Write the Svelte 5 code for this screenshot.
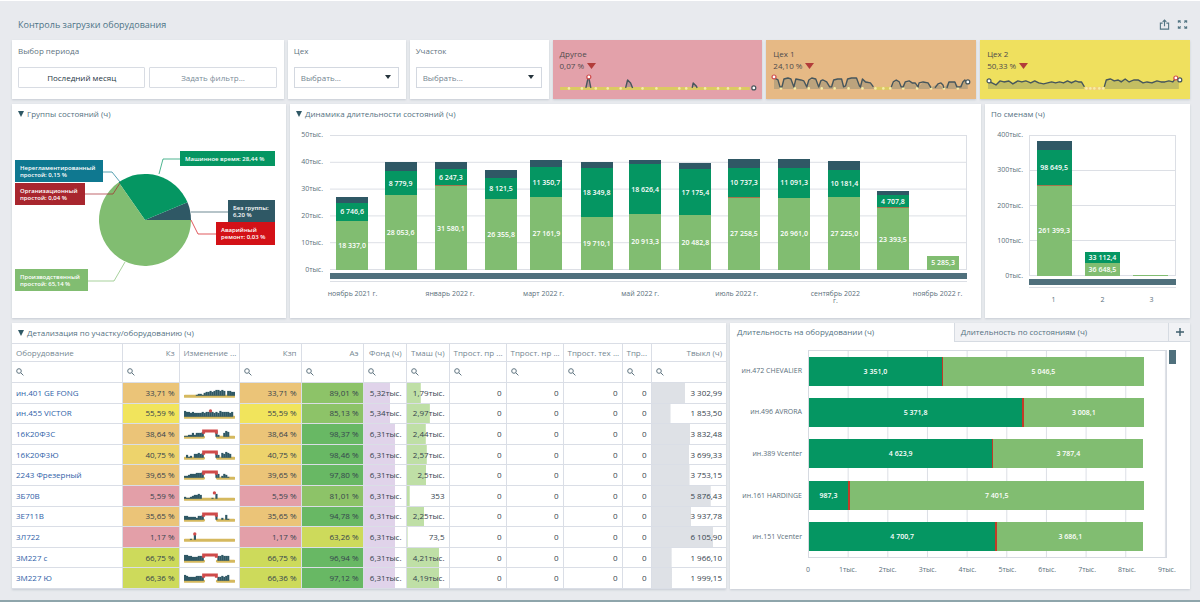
<script lang="ts">
  type Period = { days: number; label?: string; idle: number; work: number; none: number; fault?: boolean };
  type Shift = { label: string; idle: number; work: number; none: number; fault?: boolean };
  type Machine = { name: string; work: number; fault: number; idle: number };

  const MONTH_MAX = 50000;
  const SHIFT_MAX = 400000;
  const MACHINE_MAX = 9000;

  let activeTab = $state(0);
  let shop = $state('');
  let area = $state('');

  const kpis = [
    {
      name: 'Другое',
      value: '0,07 %',
      tone: 'pink',
      line: 'M26 15L28 6L29 5L31 15M66 15L68 7L71 10L73 15M133 15L134 10L137 13L138 15',
      fill: 'M26 15L28 6L29 5L31 15ZM66 15L68 7L71 10L73 15ZM133 15L134 10L137 13L138 15Z',
      base: [[0, 191]],
      dots: [9, 22, 36, 48, 61, 83, 97, 120, 127, 146, 159, 169, 181],
      max: [28, 4],
      last: [195, 15]
    },
    {
      name: 'Цех 1',
      value: '24,10 %',
      tone: 'orange',
      line: 'M1 5L5 7L7 14L9 14L11 6L15 5L18 6L21 14L23 6L28 7L31 8L34 14L36 7L39 5L43 6L46 14L48 8L50 7L54 9L57 14L59 14L61 7L65 6L69 6L71 14L73 13L75 6L79 5L84 5L87 13L88 14L90 6L93 9L98 10L101 14M119 14L121 9L124 7L127 9L129 14L131 14L133 9L137 8L140 10L143 10L146 14L147 10L151 9L156 10L159 15M163 15L166 11L169 10L171 12L172 15M175 15L177 9L180 9L183 9L185 14L189 14L191 9L193 7L195 10L196 9',
      fill: 'M1 16L1 5L5 7L8 14L11 6L18 6L21 14L23 6L31 8L34 14L36 7L43 6L46 14L48 8L54 9L57 14L61 7L69 6L72 14L75 6L84 5L87 14L90 6L98 10L101 14L119 14L124 7L129 14L133 9L143 10L146 14L151 9L156 10L160 14L166 11L172 15L177 9L183 9L187 14L193 7L196 9L196 16Z',
      base: [[102, 118]],
      dots: [8, 22, 36, 49, 62, 76, 90, 103, 111, 118, 131, 145, 159, 172, 186],
      max: [0, 4],
      last: [196, 9]
    },
    {
      name: 'Цех 2',
      value: '50,33 %',
      tone: 'yellow',
      line: 'M1 8L5 10L9 12L13 8L17 9L22 8L26 11L31 8L35 9L39 8L44 10L48 8L52 10L57 11L61 10L65 9L69 10L73 9L77 10L81 8L85 10L89 8L92 9L95 9L98 14M118 14L120 7L124 6L128 8L132 7L135 9L139 6L143 9L148 7L152 7L157 10L161 9L166 10L171 8L175 9L179 9L183 8L187 9L190 5L193 7',
      fill: 'M1 16L1 8L9 12L13 8L22 8L26 11L31 8L44 10L48 8L57 11L65 9L77 10L81 8L89 8L95 9L98 16ZM118 16L120 7L128 8L139 6L143 9L152 7L157 10L171 8L187 9L190 5L193 7L193 16Z',
      base: [[98, 118]],
      dots: [100, 104, 108, 113, 117],
      first: [2, 8],
      max: [189, 5],
      last: [194, 7]
    }
  ];

  const center = { x: 133, y: 96, r: 46 };
  const slices = [
    { share: 6.26, color: '#2f5865' },
    { share: 28.44, color: '#059662' },
    { share: 65.3, color: '#81bd71' }
  ];

  const callouts = [
    { lines: ['Машинное время: 28,44 %'], x: 168, y: 27, w: 95, h: 15, color: '#059662', path: '147,50 151,35 168,35' },
    { lines: ['Нерегламентированный', 'простой: 0,15 %'], x: 3, y: 36, w: 88, h: 22, color: '#0f7890', path: '108,58 100,48 91,48' },
    { lines: ['Организационный', 'простой: 0,04 %'], x: 3, y: 59, w: 70, h: 22, color: '#a8262e', path: '108,59 101,70 73,70' },
    { lines: ['Без группы:', '6,20 %'], x: 216, y: 76, w: 47, h: 22, color: '#2f5865', path: '179,88 216,88' },
    { lines: ['Аварийный', 'ремонт: 0,03 %'], x: 204, y: 98, w: 59, h: 23, color: '#d31117', path: '179,96 186,110 204,110' },
    { lines: ['Производственный', 'простой: 65,14 %'], x: 3, y: 145, w: 73, h: 22, color: '#81bd71', path: '113,138 102,157 76,157' }
  ];

  const periods: Period[] = [
    { days: 30, label: 'ноябрь 2021 г.', idle: 18337, work: 6746.6, none: 2000 },
    { days: 31, idle: 28053.6, work: 8779.9, none: 3500 },
    { days: 31, label: 'январь 2022 г.', idle: 31580.1, work: 6247.3, none: 2500, fault: true },
    { days: 28, idle: 26355.8, work: 8121.5, none: 3000 },
    { days: 31, label: 'март 2022 г.', idle: 27161.9, work: 11350.7, none: 2600 },
    { days: 30, idle: 19710.1, work: 18349.8, none: 2100 },
    { days: 31, label: 'май 2022 г.', idle: 20913.3, work: 18626.4, none: 1600 },
    { days: 30, idle: 20482.8, work: 17175.4, none: 2400 },
    { days: 31, label: 'июль 2022 г.', idle: 27258.5, work: 10737.3, none: 3500, fault: true },
    { days: 31, idle: 26961, work: 11091.3, none: 3400 },
    { days: 30, label: 'сентябрь 2022 г.', idle: 27225, work: 10181.4, none: 3200 },
    { days: 31, idle: 23393.5, work: 4707.8, none: 1500, fault: true },
    { days: 24, label: 'ноябрь 2022 г.', idle: 5285.3, work: 0, none: 0 }
  ];
  const columns = periods.map((p) => p.days + 'fr').join(' ');

  const shifts: Shift[] = [
    { label: '1', idle: 263000, work: 98649.5, none: 26000, fault: true },
    { label: '2', idle: 36648.5, work: 33112.4, none: 0 },
    { label: '3', idle: 4000, work: 0, none: 0 }
  ];
  shifts[0].idle = 261399.3;

  const machines: Machine[] = [
    { name: 'ин.472 CHEVALIER', work: 3351, fault: 36, idle: 5046.5 },
    { name: 'ин.496 AVRORA', work: 5371.8, fault: 54, idle: 3008.1 },
    { name: 'ин.389 Vcenter', work: 4623.9, fault: 20, idle: 3787.4 },
    { name: 'ин.161 HARDINGE', work: 987.3, fault: 46, idle: 7401.5 },
    { name: 'ин.151 Vcenter', work: 4700.7, fault: 46, idle: 3686.1 }
  ];

  const headers = [
    { title: 'Оборудование', width: 110, left: true },
    { title: 'Кз', width: 57 },
    { title: 'Изменение ...', width: 60, left: true, noFilter: true },
    { title: 'Кзп', width: 62 },
    { title: 'Аэ', width: 62 },
    { title: 'Фонд (ч)', width: 43 },
    { title: 'Тмаш (ч)', width: 43 },
    { title: 'Тпрост. пр ...', width: 57 },
    { title: 'Тпрост. нр ...', width: 57 },
    { title: 'Тпрост. тех ...', width: 59 },
    { title: 'Тпр...', width: 29 },
    { title: 'Твыкл (ч)', width: 75 }
  ];
  const tableWidth = headers.reduce((sum, h) => sum + h.width, 0);

  // trend: one digit per step, the height of the load bar
  const rows = [
    { name: 'ин.401 GE FONG', load: 33.71, avail: 89.01, fund: '5,32тыс.', fundV: 5.32, work: '1,79тыс.', workV: 1.79, off: 3302.99, trend: '00000012213445456656505544', peak: false },
    { name: 'ин.455 VICTOR', load: 55.59, avail: 85.13, fund: '5,34тыс.', fundV: 5.34, work: '2,97тыс.', workV: 2.97, off: 1853.5, trend: '65545444454555545465555450', dot: 27 },
    { name: '16К20Ф3С', load: 38.64, avail: 98.37, fund: '6,31тыс.', fundV: 6.31, work: '2,44тыс.', workV: 2.44, off: 3832.48, trend: '11224244450000006200465000', peak: true },
    { name: '16К20Ф3Ю', load: 40.75, avail: 98.46, fund: '6,31тыс.', fundV: 6.31, work: '2,57тыс.', workV: 2.57, off: 3699.33, trend: '03120445450000006305465400', peak: true },
    { name: '2243 Фрезерный', load: 39.65, avail: 97.8, fund: '6,31тыс.', fundV: 6.31, work: '2,5тыс.', workV: 2.5, off: 3753.15, trend: '22344455560000006402431000', peak: true },
    { name: '3Б70В', load: 5.59, avail: 81.01, fund: '6,31тыс.', fundV: 6.31, work: '353', workV: 0.353, off: 5876.43, trend: '21123445400000105000000000', dot: 31 },
    { name: '3Е711В', load: 35.65, avail: 94.78, fund: '6,31тыс.', fundV: 6.31, work: '2,25тыс.', workV: 2.25, off: 3937.78, trend: '44333324450000005002051000', peak: true },
    { name: '3Л722', load: 1.17, avail: 63.26, fund: '6,31тыс.', fundV: 6.31, work: '73,5', workV: 0.0735, off: 6105.9, trend: '00010500000000000000000000', dot: 11 },
    { name: '3М227 с', load: 66.75, avail: 96.94, fund: '6,31тыс.', fundV: 6.31, work: '4,21тыс.', workV: 4.21, off: 1966.1, trend: '66554445550000000556555000', peak: true },
    { name: '3М227 Ю', load: 66.36, avail: 97.12, fund: '6,31тыс.', fundV: 6.31, work: '4,19тыс.', workV: 4.19, off: 1999.15, trend: '65444455540000000445456000', peak: true }
  ];

  function group(value: number, digits = 1) {
    const [whole, rest] = value.toFixed(digits).split('.');
    return whole.replace(/\B(?=(\d{3})+$)/g, ' ') + ',' + rest;
  }

  function percent(value: number) {
    return value.toFixed(2).replace('.', ',') + ' %';
  }

  function level(value: number) {
    if (value < 10) return 'low';
    if (value < 40) return 'weak';
    if (value < 50) return 'medium';
    if (value < 60) return 'fair';
    if (value < 70) return 'good';
    if (value < 90) return 'high';
    return 'best';
  }

  function slicePath(index: number) {
    const before = slices.slice(0, index).reduce((sum, s) => sum + s.share, 0);
    const from = (before / 100) * Math.PI * 2;
    const to = ((before + slices[index].share) / 100) * Math.PI * 2;
    const { x, y, r } = center;
    const big = to - from > Math.PI ? 1 : 0;
    return `M${x} ${y}L${x + r * Math.cos(from)} ${y - r * Math.sin(from)}A${r} ${r} 0 ${big} 0 ${x + r * Math.cos(to)} ${y - r * Math.sin(to)}Z`;
  }
</script>

{#snippet segments(item, max)}
  <div class="segment idle" class:fault-edge={item.fault} style="height: {(item.idle / max) * 100}%">
    {#if item.idle / max > 0.05}<span>{group(item.idle)}</span>{/if}
  </div>
  {#if item.work}
    <div class="segment work" style="height: {(item.work / max) * 100}%"><span>{group(item.work)}</span></div>
  {/if}
  {#if item.none}
    <div class="segment none" style="height: {(item.none / max) * 100}%"></div>
  {/if}
{/snippet}

<div class="page">
  <header>
    <h1>Контроль загрузки оборудования</h1>
    <div class="tools">
      <button aria-label="Экспорт">
        <svg viewBox="0 0 12 12" width="11" height="11">
          <path d="M4 4.5H1.5V11H10.5V4.5H8M6 8V1.5M4 3.2L6 1.2L8 3.2" />
        </svg>
      </button>
      <button aria-label="Во весь экран">
        <svg viewBox="0 0 12 12" width="11" height="11">
          <path d="M1.5 4V2H4M2 2.2L4 4M8 2H10.5V4M10 2.2L8 4M1.5 8V10H4M2 9.8L4 8M8 10H10.5V8M10 9.8L8 8" />
        </svg>
      </button>
    </div>
  </header>

  <main>
    <section class="row top">
      <div class="panel filter period">
        <h2>Выбор периода</h2>
        <div class="choices">
          <button class="choice active">Последний месяц</button>
          <button class="choice">Задать фильтр...</button>
        </div>
      </div>
      <div class="panel filter shop">
        <label for="shop">Цех</label>
        <div class="select">
          <select id="shop" bind:value={shop}>
            <option value="">Выбрать...</option>
            <option>Цех 1</option>
            <option>Цех 2</option>
          </select>
          <svg viewBox="0 0 6 4" width="6" height="4"><path d="M0 0H6L3 4Z" /></svg>
        </div>
      </div>
      <div class="panel filter area">
        <label for="area">Участок</label>
        <div class="select">
          <select id="area" bind:value={area}>
            <option value="">Выбрать...</option>
          </select>
          <svg viewBox="0 0 6 4" width="6" height="4"><path d="M0 0H6L3 4Z" /></svg>
        </div>
      </div>
      {#each kpis as kpi}
        <div class="panel kpi {kpi.tone}">
          <div class="kpi-name">{kpi.name}</div>
          <div class="kpi-value">
            {kpi.value}
            <svg viewBox="0 0 9 6" width="9" height="6"><path d="M0 0H9L4.5 6Z" /></svg>
          </div>
          <svg class="kpi-trend" viewBox="0 0 198 20">
            <path class="area-fill" d={kpi.fill} />
            {#each kpi.base as [from, to]}
              <path class="base" d="M{from} 15.5H{to}" />
            {/each}
            {#each kpi.dots as dot}
              <circle class="dot" cx={dot} cy="15.5" r="1.3" />
            {/each}
            <path class="load" d={kpi.line} />
            {#if kpi.first}
              <circle class="mark" cx={kpi.first[0]} cy={kpi.first[1]} r="2" />
            {/if}
            <circle class="mark max" cx={kpi.max[0] + 1} cy={kpi.max[1]} r="2" />
            <circle class="mark" cx={kpi.last[0]} cy={kpi.last[1]} r="2" />
          </svg>
        </div>
      {/each}
    </section>

    <section class="row middle">
      <div class="panel groups">
        <h2><span class="fold"></span>Группы состояний (ч)</h2>
        <svg class="pie" viewBox="0 0 274 194">
          {#each slices as slice, i}
            <path d={slicePath(i)} fill={slice.color} />
          {/each}
          {#each callouts as c}
            <polyline points={c.path} fill="none" stroke={c.color} stroke-width="0.7" />
            <rect x={c.x} y={c.y} width={c.w} height={c.h} fill={c.color} />
            {#each c.lines as line, i}
              <text x={c.x + 5} y={c.y + 10 + i * 7}>{line}</text>
            {/each}
          {/each}
        </svg>
      </div>

      <div class="panel dynamics">
        <h2><span class="fold"></span>Динамика длительности состояний (ч)</h2>
        <div class="chart">
          <div class="y-axis">
            {#each [50, 40, 30, 20, 10, 0] as tick}<span>{tick}тыс.</span>{/each}
          </div>
          <div class="plot-box">
            <div class="plot months" style="grid-template-columns: {columns}">
              {#each periods as period}
                <div class="bar" style="width: {(19.8 / period.days) * 100}%">
                  {@render segments(period, MONTH_MAX)}
                </div>
              {/each}
            </div>
            <div class="scroll"></div>
            <div class="x-axis months-axis" style="grid-template-columns: {columns}">
              {#each periods as period}
                <div class="tick" style="width: {(19.8 / period.days) * 100}%">
                  {#if period.label}<span>{period.label}</span>{/if}
                </div>
              {/each}
            </div>
          </div>
        </div>
      </div>

      <div class="panel shifts">
        <h2>По сменам (ч)</h2>
        <div class="chart">
          <div class="y-axis">
            {#each [400, 300, 200, 100, 0] as tick}<span>{tick}тыс.</span>{/each}
          </div>
          <div class="plot-box">
            <div class="plot by-shift">
              {#each shifts as shift}
                <div class="bar">{@render segments(shift, SHIFT_MAX)}</div>
              {/each}
            </div>
            <div class="scroll"></div>
            <div class="x-axis shift-axis">
              {#each shifts as shift}<div class="tick">{shift.label}</div>{/each}
            </div>
          </div>
        </div>
      </div>
    </section>

    <section class="row bottom">
      <div class="panel details">
        <h2><span class="fold"></span>Детализация по участку/оборудованию (ч)</h2>
        <table>
          <colgroup>
            {#each headers as h}<col style="width: {(h.width / tableWidth) * 100}%" />{/each}
          </colgroup>
          <thead>
            <tr>
              {#each headers as h}<th class:left={h.left}>{h.title}</th>{/each}
            </tr>
            <tr class="search">
              {#each headers as h}
                <td>
                  {#if !h.noFilter}
                    <label>
                      <svg viewBox="0 0 8 8" width="8" height="8">
                        <circle cx="3" cy="3" r="2.3" />
                        <path d="M4.8 4.8L7.4 7.4" />
                      </svg>
                      <input type="text" aria-label="Поиск: {h.title}" />
                    </label>
                  {/if}
                </td>
              {/each}
            </tr>
          </thead>
          <tbody>
            {#each rows as row}
              <tr>
                <td class="left"><a href="#machine">{row.name}</a></td>
                <td class={level(row.load)}>{percent(row.load)}</td>
                <td class="trend">
                  <svg viewBox="0 0 52 14">
                    {#if row.peak}
                      <path class="ground" d="M1 10.5H20M34 10.5H51" />
                    {:else}
                      <path class="ground" d="M1 10.5H51" />
                    {/if}
                    {#each row.trend as step, i}
                      <rect x={i * 2} y={10 - Number(step)} width="2.2" height={Number(step)} />
                    {/each}
                    {#if row.peak}
                      <path class="peak" d="M20 7V4H33V7" />
                    {:else if row.dot}
                      <circle cx={row.dot} cy="4" r="1.7" />
                    {/if}
                  </svg>
                </td>
                <td class={level(row.load)}>{percent(row.load)}</td>
                <td class={level(row.avail)}>{percent(row.avail)}</td>
                <td class="gauge lilac" style="--fill: {(row.fundV / 8.5) * 100}%">{row.fund}</td>
                <td class="gauge lime" style="--fill: {(row.workV / 5.45) * 100}%">{row.work}</td>
                <td>0</td>
                <td>0</td>
                <td>0</td>
                <td>0</td>
                <td class="gauge grey" style="--fill: {(row.off / 7400) * 100}%">{group(row.off, 2)}</td>
              </tr>
            {/each}
          </tbody>
        </table>
      </div>

      <div class="panel machines">
        <div class="tabs" role="tablist">
          <button role="tab" aria-selected={activeTab === 0} class:active={activeTab === 0} onclick={() => (activeTab = 0)}>
            Длительность на оборудовании (ч)
          </button>
          <button role="tab" aria-selected={activeTab === 1} class:active={activeTab === 1} onclick={() => (activeTab = 1)}>
            Длительность по состояниям (ч)
          </button>
          <button class="add" aria-label="Добавить">
            <svg viewBox="0 0 8 8" width="8" height="8"><path d="M4 0V8M0 4H8" /></svg>
          </button>
        </div>
        <div class="h-chart">
          <div class="names">
            {#each machines as machine}<span>{machine.name}</span>{/each}
          </div>
          <div class="h-plot">
            {#each machines as machine}
              <div class="h-bar">
                <div class="work" style="width: {(machine.work / MACHINE_MAX) * 100}%">{group(machine.work)}</div>
                <div class="fault" style="width: {(machine.fault / MACHINE_MAX) * 100}%"></div>
                <div class="idle" style="width: {(machine.idle / MACHINE_MAX) * 100}%">{group(machine.idle)}</div>
              </div>
            {/each}
          </div>
          <div class="v-scroll"></div>
          <div class="h-axis">
            {#each [0, 1, 2, 3, 4, 5, 6, 7, 8, 9] as tick}
              <span>{tick ? tick + 'тыс.' : '0'}</span>
            {/each}
          </div>
        </div>
      </div>
    </section>
  </main>
</div>

<style>
  :global(body) {
    margin: 0;
    background: #e8eaee;
  }

  .page {
    box-sizing: border-box;
    min-height: 100vh;
    padding: 0 10px 10px 12px;
    border-top: 1px solid #fff;
    border-bottom: 2px solid #8ea5ab;
    background: #e8eaee;
    color: #3c4f5c;
    font-family: 'Open Sans', 'Noto Sans', sans-serif;
    font-size: 8px;
    line-height: 12px;
  }

  button,
  input,
  select {
    font: inherit;
    color: inherit;
  }

  header {
    display: flex;
    align-items: center;
    justify-content: space-between;
    height: 31px;
    padding: 8px 2px 0 6px;
  }

  h1,
  h2 {
    margin: 0;
    font-weight: 400;
  }

  h1 {
    font-size: 9px;
    color: #4c7386;
  }

  .tools {
    display: flex;
    gap: 7px;
  }

  .tools button {
    display: flex;
    padding: 0;
    border: 0;
    background: none;
  }

  .tools path {
    fill: none;
    stroke: #527583;
    stroke-width: 1.2;
  }

  main {
    display: flex;
    flex-direction: column;
    gap: 5px;
  }

  .row {
    display: grid;
    gap: 4px;
  }

  .top {
    grid-template-columns: 272fr 118fr 139fr 210fr 210fr 210fr;
  }

  .middle {
    grid-template-columns: 274fr 691fr 205fr;
  }

  .bottom {
    grid-template-columns: 714fr 460fr;
  }

  .panel {
    min-width: 0;
    background: #fff;
    box-shadow: 0 1px 2px #c6ccd4;
  }

  h2 {
    display: flex;
    align-items: center;
    gap: 3px;
    height: 20px;
    padding-left: 6px;
    font-size: 8px;
    color: #547181;
  }

  .fold {
    border: 3px solid transparent;
    border-top: 6px solid #2f5865;
    border-bottom: 0;
  }

  .filter {
    padding: 0 7px 11px 6px;
    color: #5f7480;
  }

  .filter h2,
  .filter label {
    display: block;
    height: 12px;
    padding: 5px 0 10px;
    font-size: 8px;
    color: #5f7480;
  }

  .choices {
    display: flex;
    gap: 4px;
  }

  .choice {
    flex: 1;
    height: 21px;
    padding: 0;
    border: 1px solid #d8dce3;
    border-radius: 1px;
    background: #fff;
    color: #7b8d99;
  }

  .choice.active {
    color: #27363f;
  }

  .select {
    position: relative;
    display: flex;
  }

  .select select {
    appearance: none;
    flex: 1;
    min-width: 0;
    height: 21px;
    padding: 0 16px 0 6px;
    border: 1px solid #d3d8e0;
    border-radius: 0;
    background: #fff;
    color: #73848f;
  }

  .select svg {
    position: absolute;
    top: 8px;
    right: 8px;
    fill: #26343c;
    pointer-events: none;
  }

  .kpi {
    padding: 8px 6px 0 7px;
    color: #4d4a4c;
  }

  .kpi.pink {
    background: #e3a1aa;
  }

  .kpi.orange {
    background: #e6b985;
  }

  .kpi.yellow {
    background: #efe05e;
  }

  .kpi-value {
    display: flex;
    align-items: center;
    gap: 3px;
    margin-bottom: 1px;
  }

  .kpi-value path {
    fill: #b23c3a;
  }

  .kpi-trend {
    display: block;
    width: 100%;
    overflow: visible;
  }

  .area-fill {
    fill: #5d6f6c;
    opacity: 0.3;
  }

  .load {
    fill: none;
    stroke: #46565c;
    stroke-width: 1.4;
    stroke-linejoin: round;
  }

  .base {
    stroke: #dcca62;
    stroke-width: 3;
  }

  .yellow .base {
    stroke: #f0cd7c;
  }

  .dot {
    fill: #f6eda6;
  }

  .mark {
    fill: #fff;
    stroke: #46565c;
    stroke-width: 1.2;
  }

  .mark.max {
    stroke: #cf4b4b;
  }

  .pie {
    display: block;
    width: 100%;
  }

  .pie text {
    fill: #fff;
    font-size: 6px;
    font-weight: 600;
  }

  .chart {
    display: flex;
    margin-top: 11px;
    font-size: 7px;
    line-height: 7px;
    color: #5b6f7b;
  }

  .y-axis {
    display: flex;
    flex-direction: column;
    justify-content: space-between;
    text-align: right;
  }

  .y-axis span {
    height: 0;
    line-height: 0;
  }

  .dynamics .y-axis {
    width: 33px;
    height: 135px;
    padding-right: 7px;
  }

  .shifts .y-axis {
    width: 38px;
    height: 141px;
    padding-right: 6px;
  }

  .plot-box {
    flex: 1;
    min-width: 0;
    margin-right: 14px;
  }

  .plot {
    box-sizing: border-box;
    border: 1px solid #dcdfe5;
    border-width: 1px 1px 0 0;
    background-image: linear-gradient(to top, #dcdfe5 1px, transparent 1px);
  }

  .months {
    display: grid;
    height: 135px;
    padding-left: 6px;
    background-size: 100% 20%;
  }

  .by-shift {
    display: flex;
    justify-content: space-around;
    height: 141px;
    border-left-width: 1px;
    background-size: 100% 25%;
  }

  .by-shift .bar {
    width: 24%;
  }

  .bar {
    display: flex;
    flex-direction: column-reverse;
    height: 100%;
    min-height: 0;
  }

  .segment {
    box-sizing: border-box;
    display: flex;
    flex-shrink: 0;
    align-items: center;
    justify-content: center;
    color: #fff;
    font-weight: 600;
    white-space: nowrap;
  }

  .idle {
    background: #81bd71;
  }

  .work {
    background: #059662;
  }

  .none {
    background: #2f5865;
  }

  .fault-edge {
    border-top: 1px solid #a5764c;
  }

  .scroll {
    height: 6px;
    margin-top: 3px;
    padding-bottom: 2px;
    border-bottom: 1px solid #dcdfe5;
    background: #4f707c content-box;
  }

  .x-axis {
    margin-top: 8px;
  }

  .months-axis {
    display: grid;
    padding-left: 6px;
  }

  .months-axis .tick {
    display: flex;
    justify-content: center;
  }

  .tick span {
    flex: none;
    width: 50px;
    text-align: center;
  }

  .shift-axis {
    display: flex;
    justify-content: space-around;
  }

  .shift-axis .tick {
    width: 24%;
    text-align: center;
  }

  table {
    width: 100%;
    height: 246px;
    border-collapse: collapse;
    table-layout: fixed;
  }

  th,
  td {
    padding: 0 4px;
    border: 1px solid #dadee6;
    border-width: 1px 1px 0 0;
    overflow: hidden;
    text-align: right;
    white-space: nowrap;
    color: #35434d;
  }

  th {
    height: 17px;
    font-weight: 400;
    color: #758792;
  }

  th:last-child,
  td:last-child {
    border-right: 0;
  }

  tbody tr:last-child td {
    border-bottom: 1px solid #dadee6;
  }

  .left {
    text-align: left;
  }

  .search td {
    height: 20px;
  }

  .search label {
    display: flex;
    align-items: center;
    gap: 2px;
  }

  .search svg {
    flex: none;
    fill: none;
    stroke: #5f7480;
    stroke-width: 1;
  }

  .search input {
    width: 100%;
    min-width: 0;
    height: 14px;
    padding: 0;
    border: 0;
    outline: 0;
    background: none;
  }

  a {
    color: #2f5fa8;
    text-decoration: none;
  }

  .low {
    background: #e39fa8;
  }

  .weak {
    background: #ebc478;
  }

  .medium {
    background: #edd36c;
  }

  .fair {
    background: #f1e45c;
  }

  .good {
    background: #cdda5b;
  }

  .high {
    background: #8dc368;
  }

  .best {
    background: #68b864;
  }

  .gauge {
    background: linear-gradient(var(--tone), var(--tone)) no-repeat;
    background-size: var(--fill) 100%;
  }

  .lilac {
    --tone: #e0d3ea;
  }

  .lime {
    --tone: #bfdfa6;
  }

  .grey {
    --tone: #dee1e6;
  }

  .trend svg {
    display: block;
    width: 100%;
    fill: #2f5865;
  }

  .ground {
    stroke: #d5b95f;
    stroke-width: 3;
    stroke-linecap: round;
  }

  .peak {
    fill: none;
    stroke: #cf4b4b;
    stroke-width: 3;
  }

  .trend circle {
    fill: #cf4b4b;
  }

  .machines {
    display: flex;
    flex-direction: column;
  }

  .tabs {
    display: flex;
    height: 19px;
  }

  .tabs button {
    flex: 214;
    padding: 0 6px;
    border: 1px solid #d6dbe2;
    border-width: 0 0 1px 1px;
    background: #f1f2f5;
    text-align: left;
    color: #547181;
  }

  .tabs button:first-child {
    flex: 224;
  }

  .tabs .active {
    border-color: transparent;
    background: #fff;
  }

  .tabs .add {
    display: flex;
    flex: 0 0 22px;
    align-items: center;
    justify-content: center;
  }

  .add path {
    stroke: #3f5f6d;
    stroke-width: 1.4;
  }

  .h-chart {
    display: grid;
    grid-template-columns: 72px 1fr 7px;
    column-gap: 6px;
    margin: 8px 14px 0 0;
    font-size: 7px;
    color: #5b6f7b;
  }

  .names {
    display: flex;
    flex-direction: column;
    justify-content: space-around;
    text-align: right;
    white-space: nowrap;
  }

  .h-plot {
    box-sizing: border-box;
    display: flex;
    flex-direction: column;
    justify-content: space-around;
    height: 208px;
    margin-right: -4px;
    border: 1px solid #d6dae1;
    background-image: linear-gradient(to left, #dcdfe5 1px, transparent 1px);
    background-size: calc(100% / 9) 100%;
  }

  .h-bar {
    display: flex;
    height: 29px;
    line-height: 29px;
    text-align: center;
    font-weight: 600;
    color: #fff;
  }

  .fault {
    background: #c23b28;
  }

  .v-scroll {
    height: 14px;
    background: #4f707c;
  }

  .h-axis {
    grid-column: 2;
    display: flex;
    justify-content: space-between;
    margin: 6px -4px 0 0;
  }

  .h-axis span {
    display: flex;
    justify-content: center;
    width: 0;
  }
</style>
